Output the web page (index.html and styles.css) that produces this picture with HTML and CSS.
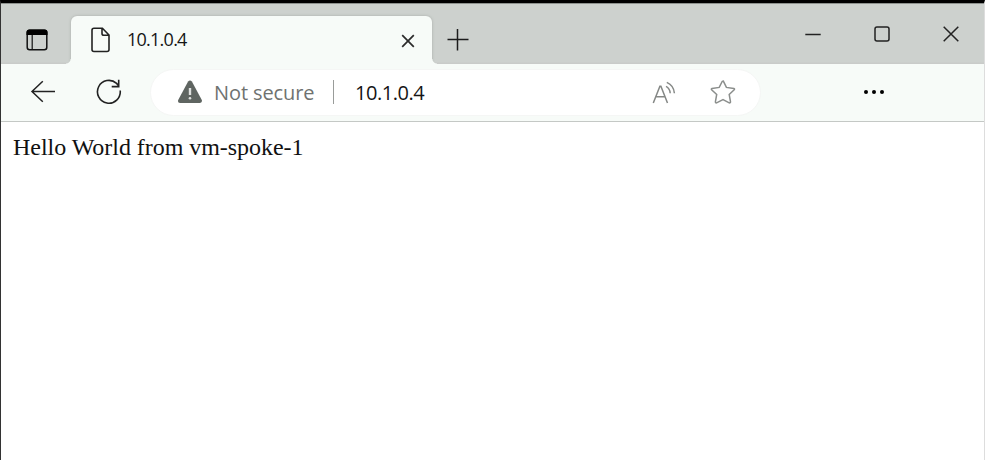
FILE: index.html
```
<!DOCTYPE html>
<html lang="en">
<head>
<meta charset="utf-8">
<title>10.1.0.4</title>
<link rel="stylesheet" href="styles.css">
</head>
<body>
<div class="window">
  <header class="titlebar">
    <svg class="tab-actions" width="24" height="24" viewBox="0 0 24 24"><rect x="2.2" y="2.2" width="19.6" height="19.6" rx="2.5" fill="none" stroke="#111" stroke-width="1.5"/><path d="M1.5 7V4.5Q1.5 1.5 4.5 1.5H19.5Q22.5 1.5 22.5 4.5V7Z" fill="#000"/><path d="M7.2 7V21.5" stroke="#111" stroke-width="1.2"/></svg>
    <div class="tab">
      <svg class="page-icon" width="20" height="26" viewBox="0 0 20 26" fill="none" stroke="#222" stroke-width="1.6"><path d="M3 1.2H11.4L18 8V22.5Q18 24.5 16 24.5H3Q1 24.5 1 22.5V3.2Q1 1.2 3 1.2ZM11 1.5V6.5Q11 8.3 13 8.3H18"/></svg>
      <span class="tab-title">10.1.0.4</span>
      <svg class="tab-close" width="14" height="14" viewBox="0 0 14 14"><path d="M1.2 1.2 12.8 12.8M12.8 1.2 1.2 12.8" stroke="#2b2b2b" stroke-width="1.7"/></svg>
    </div>
    <svg class="new-tab" width="22" height="22" viewBox="0 0 22 22"><path d="M.5 10.5H21.5M10.5 0V21.5" stroke="#1c1c1c" stroke-width="1.5"/></svg>
    <div class="controls">
      <svg width="16" height="16" viewBox="0 0 16 16"><path d="M.3 8.5H15.7" stroke="#222" stroke-width="1.5"/></svg>
      <svg width="16" height="16" viewBox="0 0 16 16"><rect x="1" y=".9" width="14" height="14.2" rx="2" fill="none" stroke="#222" stroke-width="1.5"/></svg>
      <svg width="16" height="16" viewBox="0 0 16 16"><path d="M.7.7 15.3 15.3M15.3.7.7 15.3" stroke="#222" stroke-width="1.5"/></svg>
    </div>
  </header>
  <nav class="toolbar">
    <svg class="back" width="26" height="24" viewBox="0 0 26 24" fill="none" stroke="#222" stroke-width="1.5"><path d="M12.8 1.3 2 11.5 12.8 21.7M2 11.5H25"/></svg>
    <svg class="reload" width="26" height="26" viewBox="0 0 26 26" fill="none" stroke="#222" stroke-width="1.6"><path d="M24.2 11.5A11.4 11.4 0 1 1 20.6 4.4L22.6 6.8M22.7 .8V7.6H15.7"/></svg>
    <div class="address">
      <svg class="warning" width="26" height="24" viewBox="0 0 26 24"><path d="M11.1 1.5Q13 -.7 14.9 1.5L24.8 20Q25.5 22.7 23 23H3Q.4 22.7 1.2 20Z" fill="#5f6561"/><path d="M13 8V15" stroke="#dfe1df" stroke-width="2.4"/><circle cx="13" cy="18.3" r="1.3" fill="#dfe1df"/></svg>
      <span class="security">Not secure</span>
      <span class="divider"></span>
      <span class="url">10.1.0.4</span>
      <svg class="read-aloud" width="24" height="23" viewBox="0 0 24 23" fill="none" stroke="#858886" stroke-width="1.5"><path d="M1.3 22 7.9 5.2H8.9L15.5 22M3.7 15.7H13.1M14 5.4Q17.8 7.3 18.2 12.2M14.8 1.4Q21.8 4.5 22.4 12.2"/></svg>
      <svg class="star" width="26" height="26" viewBox="0 0 26 26"><path d="M12.8 2Q13.2 1.7 13.5 2.4L16.4 8.4 23.9 9.4Q25 9.8 24.2 10.7L19.2 15.5 20.5 22.8Q20.5 24.2 19.2 23.8L13 20.7 6.6 23.8Q5.4 24.2 5.4 22.8L6.7 15.5 1.6 10.7Q.9 9.8 2 9.4L9.2 8.4 12.2 2.4Z" fill="none" stroke="#8b8e8c" stroke-width="1.5"/></svg>
    </div>
    <svg class="menu" width="22" height="6" viewBox="0 0 22 6"><circle cx="3" cy="3" r="2"/><circle cx="11" cy="3" r="2"/><circle cx="19" cy="3" r="2"/></svg>
  </nav>
  <main>Hello World from vm-spoke-1</main>
</div>
</body>
</html>
```
FILE: styles.css
```
* { box-sizing: border-box; }
body { margin: 0; overflow: hidden; background: #fff; }
svg { display: block; flex: none; }
.window {
  height: 460px;
  border-top: 3px solid #000;
  border-left: 1px solid #333;
  border-right: 1px solid #ddd;
  font-family: "Open Sans", "Noto Sans", sans-serif;
}
.titlebar {
  display: flex;
  height: 61px;
  background: linear-gradient(#8d918e 0 1px, #cdd1ce 1px 59px, #c9cbc9 60px);
}
.tab-actions { margin: 25px 0 0 24px; }
.tab {
  position: relative;
  display: flex;
  width: 361px;
  height: 48px;
  margin: 13px 0 0 22px;
  padding-left: 20px;
  border-radius: 6px 6px 0 0;
  background: #f7fbf8;
  box-shadow: 0 0 3px #a8aba8;
  clip-path: inset(-3px -5px 0);
}
.tab::before,
.tab::after {
  content: "";
  position: absolute;
  bottom: 0;
  width: 5px;
  height: 5px;
}
.tab::before { right: 100%; background: radial-gradient(circle at 0 0, transparent 4px, #f7fbf8 5px); }
.tab::after { left: 100%; background: radial-gradient(circle at 100% 0, transparent 4px, #f7fbf8 5px); }
.page-icon { margin-top: 11px; }
.tab-title {
  width: 274px;
  margin-left: 16px;
  font-size: 18px;
  line-height: 47px;
  letter-spacing: -.75px;
  color: #151515;
}
.tab-close { margin-top: 18px; }
.new-tab { margin: 26px 0 0 15px; }
.controls { display: flex; gap: 53px; margin: 23px 25px 0 auto; }
.toolbar {
  display: flex;
  align-items: center;
  height: 58px;
  padding: 0 0 1px 29px;
  border-bottom: 1px solid #c4c8c5;
  background: #f7fbf8;
}
.reload { margin-left: 40px; }
.address {
  display: flex;
  align-items: center;
  width: 611px;
  height: 47px;
  margin-left: 28px;
  padding-left: 26px;
  border: 1px solid #f5f6f5;
  border-radius: 24px;
  background: #fff;
}
.security { width: 118px; margin-left: 11px; font-size: 20px; line-height: 28px; letter-spacing: -.1px; color: #6f7270; white-space: nowrap; }
.divider { width: 1px; height: 24px; margin-left: 1px; background: #999c9a; }
.url { width: 297px; margin-left: 21px; padding-top: 1px; font-size: 20px; line-height: 28px; letter-spacing: -.45px; color: #151515; }
.security { padding-top: 1px; }
.star { margin-left: 34px; }
.menu { margin-left: 102px; }
main {
  padding: 11px 0 0 12px;
  font: 24px/28px "Liberation Serif", serif;
  letter-spacing: -.04px;
  color: #111;
}
```
